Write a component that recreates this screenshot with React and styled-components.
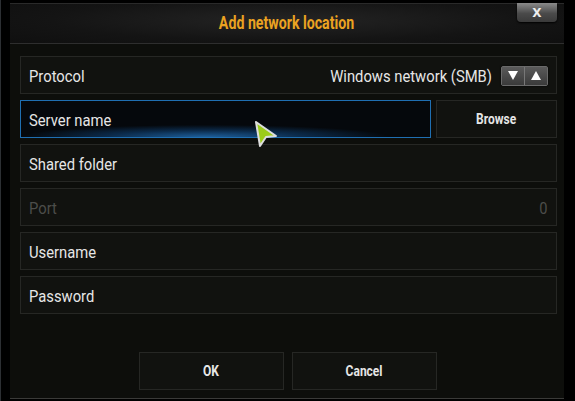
import React from "react";
import styled, { createGlobalStyle } from "styled-components";

const GlobalStyle = createGlobalStyle`
  html, body {
    margin: 0;
    padding: 0;
    background: #000;
    width: 575px;
    height: 401px;
    overflow: hidden;
  }
  #root {
    height: 401px;
  }
`;

const Screen = styled.div`
  height: 401px;
  display: flex;
  padding: 3px 11px 2px 9px;
  box-sizing: border-box;
  border-left: 1px solid #2c2f33;
  font-family: Roboto, "Liberation Sans", sans-serif;
`;

const Dialog = styled.div`
  position: relative;
  flex: 1;
  display: flex;
  flex-direction: column;
  background: #0d0e0b;
  border-bottom: 1px solid #3a3a38;
`;

const Header = styled.div`
  height: 40px;
  display: flex;
  align-items: center;
  justify-content: center;
  background: radial-gradient(ellipse at 50% 40%, #242424 0%, #141414 60%, #0f0f0f 100%);
  border-top: 1px solid #2a2a2a;
  box-shadow: inset 0 -1px 0 #2e2e2e;
`;

// condensed look: the reference uses a narrow face, so squeeze Roboto
const Narrow = styled.span`
  display: inline-block;
  white-space: nowrap;
  transform: scaleX(${(p) => p.$scale || 0.86});
  transform-origin: ${(p) => p.$origin || "center"};
`;

const Title = styled.h1`
  margin: 0 0 2px 0;
  font-size: 17.5px;
  font-weight: bold;
  color: #eba321;
`;

const Close = styled.div`
  position: absolute;
  top: 0;
  right: 7px;
  width: 40px;
  height: 19px;
  border-radius: 0 0 4px 4px;
  background: linear-gradient(#8a8a8a, #4a4a4a 55%, #3a3a3a);
  box-shadow: 0 1px 2px #000;
  display: flex;
  align-items: center;
  justify-content: center;
  color: #eee;
  font-family: "DejaVu Sans", sans-serif;
  font-weight: bold;
  font-size: 12px;
`;

const Body = styled.div`
  display: flex;
  flex-direction: column;
  gap: 6px;
  padding: 12px 7px 0 10px;
`;

const Row = styled.div`
  display: flex;
  gap: 5px;
`;

const Field = styled.div`
  flex: 1;
  height: 38px;
  box-sizing: border-box;
  display: flex;
  align-items: center;
  justify-content: space-between;
  padding: 1px 8px 0 8px;
  border: 1px solid ${(p) => (p.$focus ? "#1f6fb2" : "#262724")};
  background: ${(p) =>
    p.$focus
      ? "radial-gradient(ellipse 60% 45% at 45% 100%, #1d5e9a 0%, #0b2a4a 40%, #05080c 75%)"
      : "#11120f"};
  color: ${(p) => (p.$dim ? "#4c4d4a" : "#e6e6e6")};
  font-size: 17px;
`;

const SideButton = styled.div`
  width: 121px;
  height: 38px;
  box-sizing: border-box;
  border: 1px solid #262724;
  background: #11120f;
  display: flex;
  align-items: center;
  justify-content: center;
  color: #e6e6e6;
  font-weight: bold;
  font-size: 15px;
`;

const Value = styled.div`
  display: flex;
  align-items: center;
  gap: 9px;
`;

const Spinner = styled.div`
  display: flex;
  border: 1px solid #6a6a6a;
  border-radius: 2px;
  box-shadow: 0 0 2px #000;
`;

const Arrow = styled.div`
  width: 22px;
  height: 18px;
  display: flex;
  align-items: center;
  justify-content: center;
  background: linear-gradient(#5a5a5a, #3a3a3a);
  & + & {
    border-left: 1px solid #777;
  }
`;

const Footer = styled.div`
  margin-top: auto;
  display: flex;
  justify-content: center;
  gap: 8px;
  padding: 0 0 8px 0;
  margin-left: 1px;
`;

const Button = styled.div`
  width: 145px;
  height: 38px;
  box-sizing: border-box;
  border: 1px solid #262724;
  background: #11120f;
  display: flex;
  align-items: center;
  justify-content: center;
  color: #e6e6e6;
  font-weight: bold;
  font-size: 15px;
`;

const Pointer = styled.svg`
  position: absolute;
  left: 244px;
  top: 117px;
`;

const Tri = ({ up }) => (
  <svg width="10" height="9" viewBox="0 0 10 9">
    <path d={up ? "M5 0 L10 9 L0 9 Z" : "M0 0 L10 0 L5 9 Z"} fill="#fff" />
  </svg>
);

const Label = ({ children }) => (
  <Narrow $origin="left" $scale={0.87}>
    {children}
  </Narrow>
);

export default function App() {
  return (
    <>
      <GlobalStyle />
      <Screen>
        <Dialog>
          <Header>
            <Title>
              <Narrow $scale={0.81}>Add network location</Narrow>
            </Title>
          </Header>
          <Close>X</Close>
          <Body>
            <Row>
              <Field>
                <Label>Protocol</Label>
                <Value>
                  <Narrow $origin="right" $scale={0.87}>
                    Windows network (SMB)
                  </Narrow>
                  <Spinner>
                    <Arrow>
                      <Tri />
                    </Arrow>
                    <Arrow>
                      <Tri up />
                    </Arrow>
                  </Spinner>
                </Value>
              </Field>
            </Row>
            <Row>
              <Field $focus>
                <Label>Server name</Label>
              </Field>
              <SideButton>
                <Narrow $scale={0.8}>Browse</Narrow>
              </SideButton>
            </Row>
            <Row>
              <Field>
                <Label>Shared folder</Label>
              </Field>
            </Row>
            <Row>
              <Field $dim>
                <Label>Port</Label>
                <Narrow $origin="right">0</Narrow>
              </Field>
            </Row>
            <Row>
              <Field>
                <Label>Username</Label>
              </Field>
            </Row>
            <Row>
              <Field>
                <Label>Password</Label>
              </Field>
            </Row>
          </Body>
          <Footer>
            <Button>
              <Narrow $scale={0.8}>OK</Narrow>
            </Button>
            <Button>
              <Narrow $scale={0.8}>Cancel</Narrow>
            </Button>
          </Footer>
          <Pointer width="24" height="28" viewBox="0 0 24 28">
            <path d="M2 2 L22 16 L12 17 L6 26 Z" fill="#9ccc1a" stroke="#ddd" strokeWidth="2" strokeLinejoin="round" />
          </Pointer>
        </Dialog>
      </Screen>
    </>
  );
}
